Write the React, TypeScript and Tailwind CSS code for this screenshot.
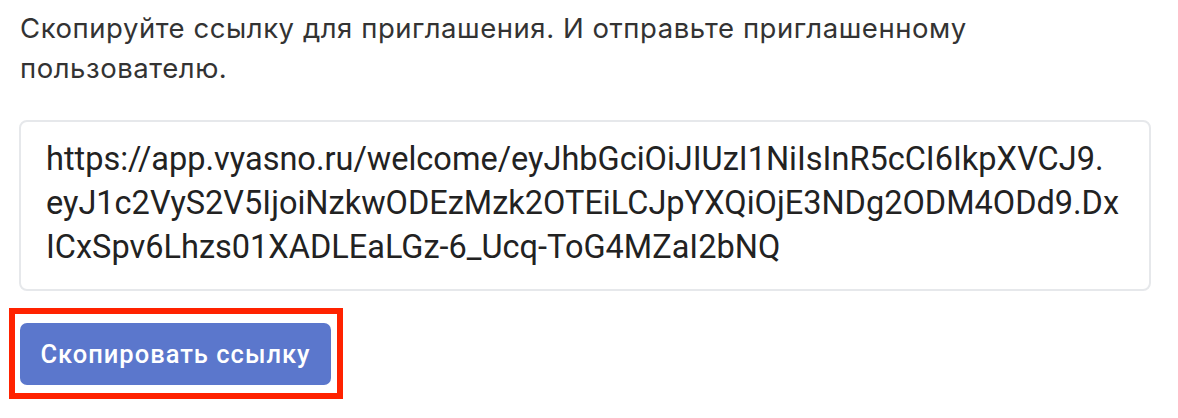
import React from "react";

const urlLines = [
  "https://app.vyasno.ru/welcome/eyJhbGciOiJIUzI1NiIsInR5cCI6IkpXVCJ9.",
  "eyJ1c2VyS2V5IjoiNzkwODEzMzk2OTEiLCJpYXQiOjE3NDg2ODM4ODd9.Dx",
  "ICxSpv6Lhzs01XADLEaLGz-6_Ucq-ToG4MZaI2bNQ",
];

const App = () => {
  return (
    <div className="w-[1178px] h-[418px] bg-white px-[20px] pt-[8px] overflow-hidden">
      <p className="font-['Inter',sans-serif] text-[27.5px] leading-[40px] tracking-[0.55px] text-[#333] w-[1000px]">
        Скопируйте ссылку для приглашения. И отправьте приглашенному пользователю.
      </p>
      <div className="mt-[32px] -ml-[1px] w-[1132px] h-[171px] border-2 border-[#e6e8eb] rounded-[8px] pl-[25px] pt-[15px]">
        <p className="font-['Roboto',sans-serif] text-[32.5px] leading-[44px] text-[#222] whitespace-nowrap">
          {urlLines.map((line) => (
            <span key={line} className="block">
              {line}
            </span>
          ))}
        </p>
      </div>
      <div className="mt-[17px] -ml-[11px] w-[334px] border-[6px] border-[#ff2200] pl-[5px] pr-[6px] pt-[9px] pb-[8px]">
        <button className="w-[311px] h-[62px] rounded-[7px] bg-[#5b77cc] text-white font-['Roboto',sans-serif] font-medium text-[25.5px] tracking-[1px]">
          Скопировать ссылку
        </button>
      </div>
    </div>
  );
};

export default App;
